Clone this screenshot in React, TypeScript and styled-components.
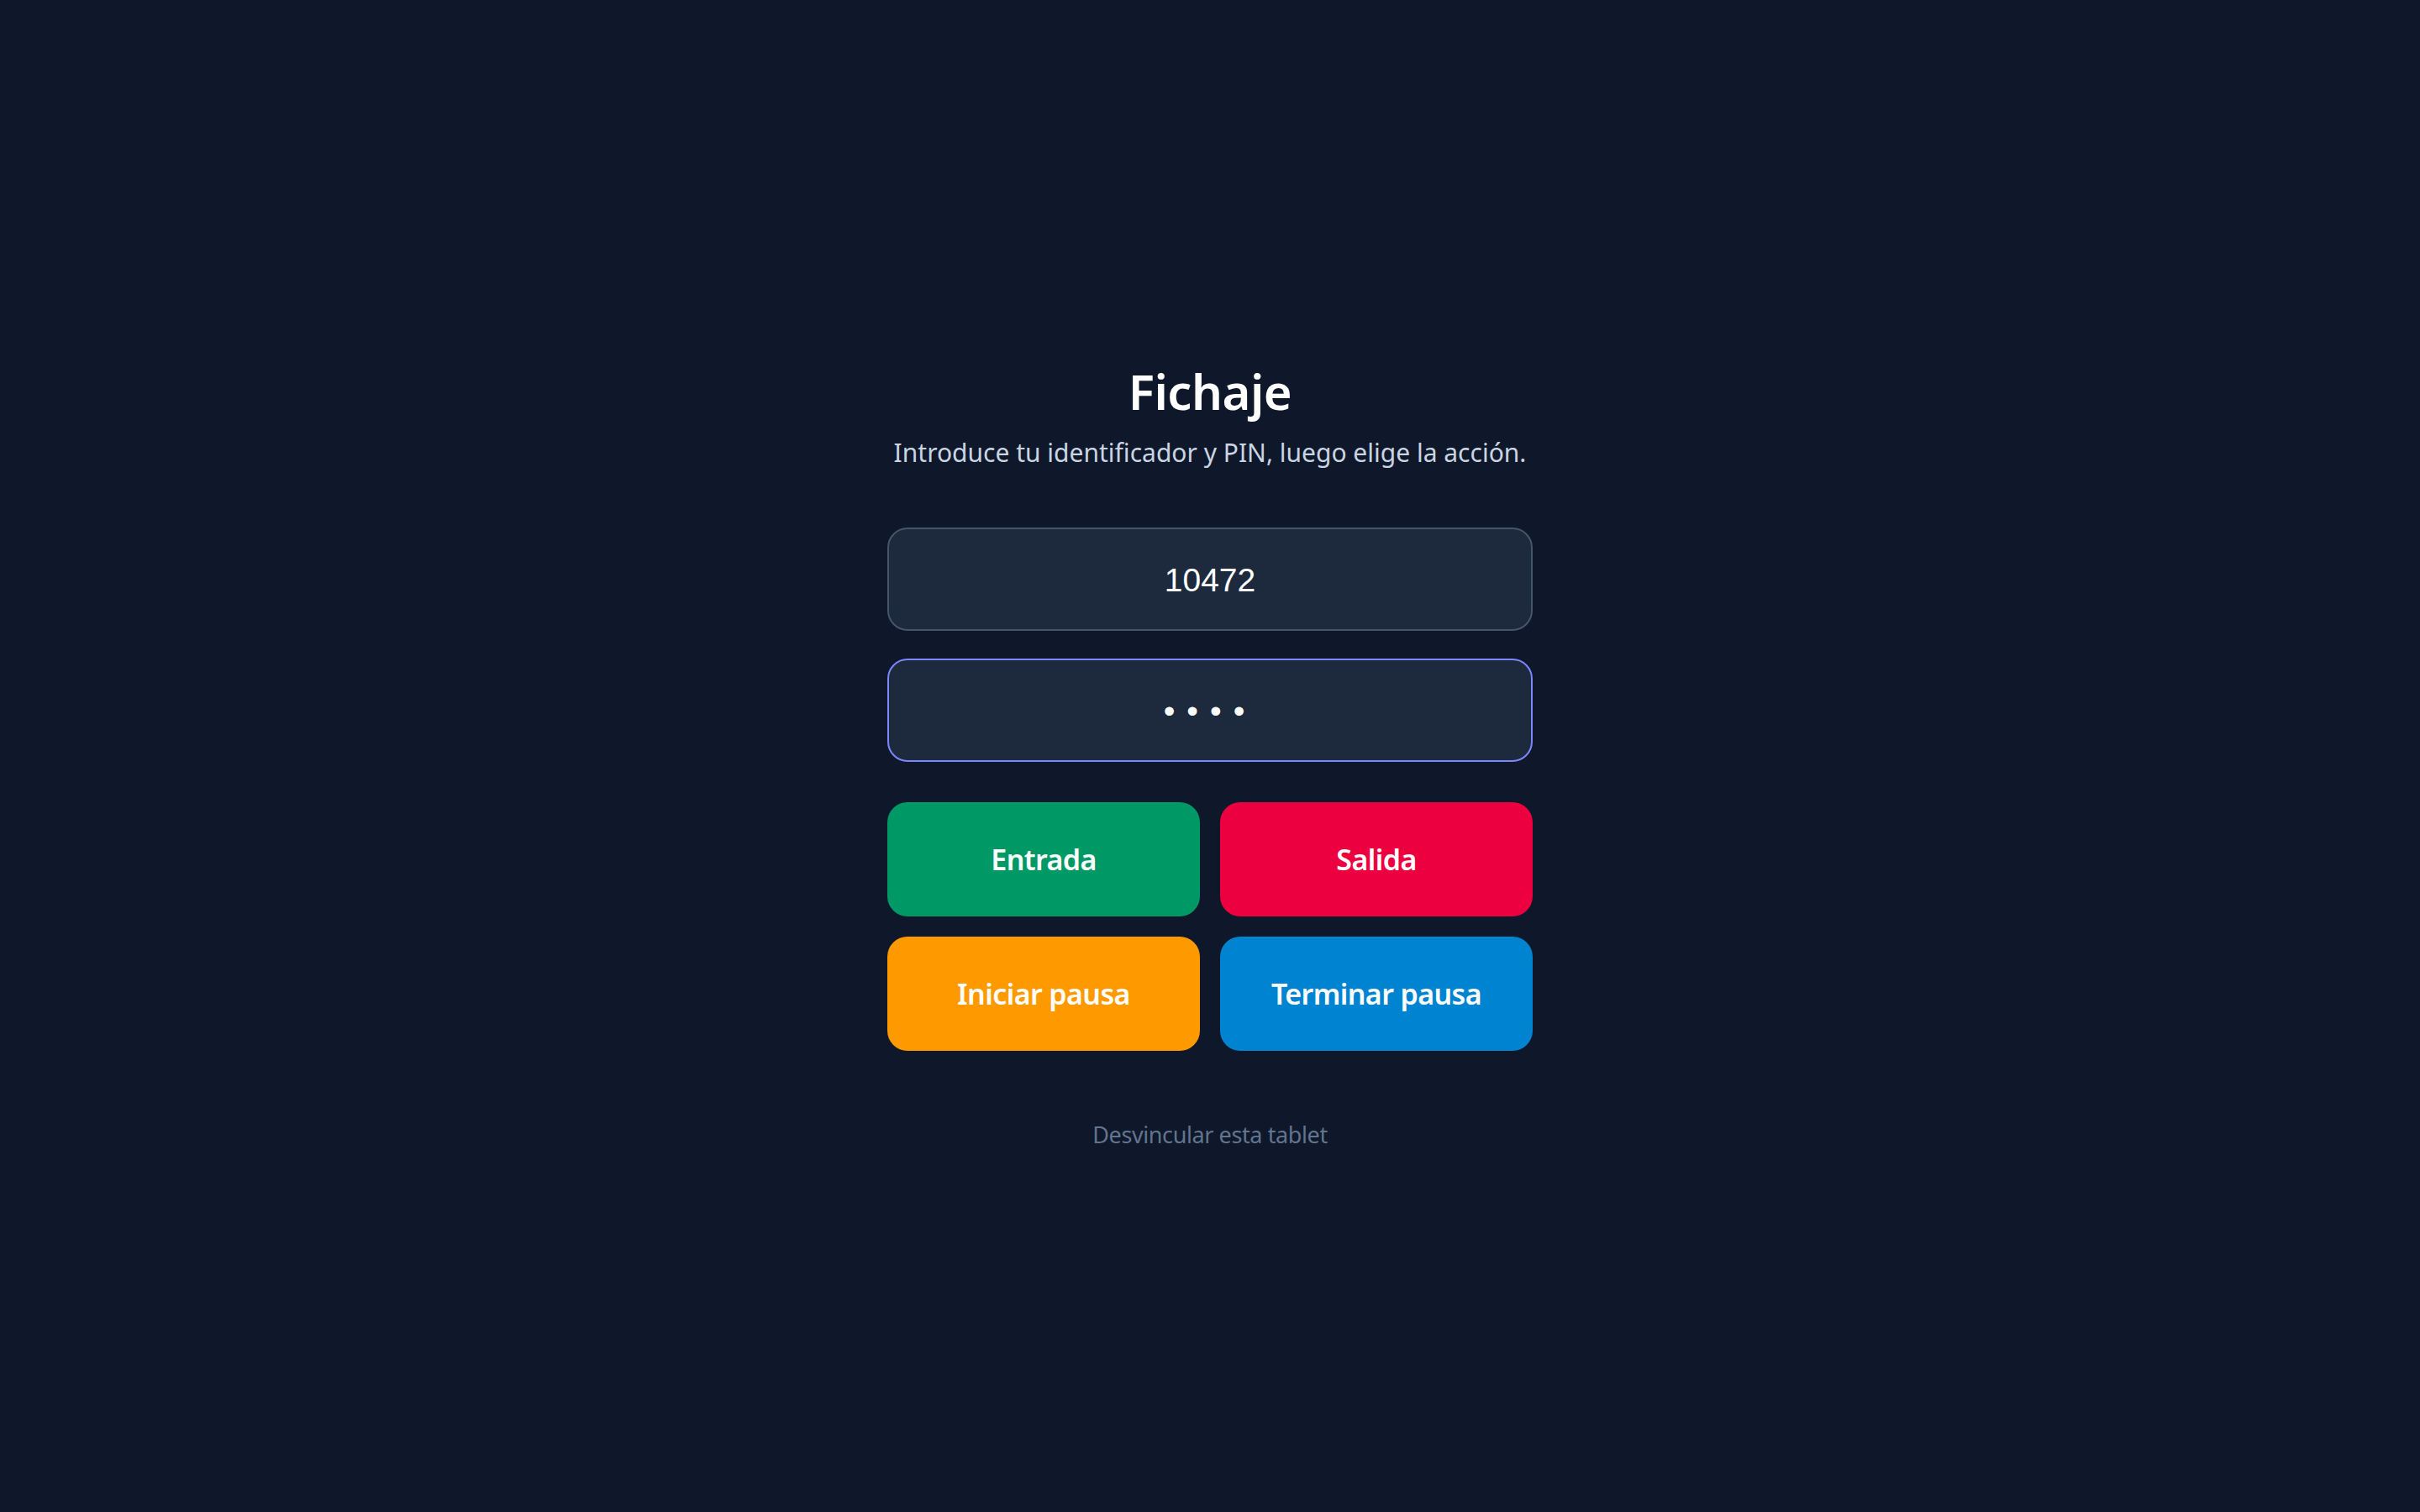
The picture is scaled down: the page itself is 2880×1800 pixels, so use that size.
import React from "react";
import styled, { createGlobalStyle } from "styled-components";

const GlobalStyle = createGlobalStyle`
  html, body {
    margin: 0;
    padding: 0;
    background: #0f172b;
  }
  body {
    font-family: "Segoe UI", "Noto Sans", "Open Sans", sans-serif;
  }
  * { box-sizing: border-box; }
`;

const Page = styled.main`
  min-height: 100vh;
  display: flex;
  align-items: center;
  justify-content: center;
  background: #0f172b;
`;

const Panel = styled.section`
  width: 768px;
  display: flex;
  flex-direction: column;
  align-items: center;
`;

const Title = styled.h1`
  margin: 0;
  font-size: 58px;
  line-height: 72px;
  font-weight: 600;
  color: #ffffff;
  letter-spacing: -0.5px;
`;

const Subtitle = styled.p`
  margin: 17px 0 0;
  font-size: 30px;
  line-height: 40px;
  color: #cad5e2;
  letter-spacing: 0px;
`;

const Form = styled.form`
  width: 100%;
  margin-top: 69px;
  display: flex;
  flex-direction: column;
  gap: 33px;
`;

const Field = styled.input<{ $active?: boolean }>`
  width: 100%;
  height: 123px;
  border-radius: 24px;
  border: 2px solid ${(p) => (p.$active ? "#7c86ff" : "#45556c")};
  background: #1d293d;
  color: #ffffff;
  font-family: "Liberation Sans", Arial, sans-serif;
  font-size: 39px;
  text-align: center;
  outline: none;
  padding: 4px 24px 0;
  letter-spacing: ${(p) => (p.$active ? "14px" : "0")};
`;

const Actions = styled.div`
  width: 100%;
  margin-top: 48px;
  display: grid;
  grid-template-columns: 1fr 1fr;
  gap: 24px;
`;

const ActionButton = styled.button<{ $bg: string }>`
  height: 136px;
  border: none;
  border-radius: 24px;
  background: ${(p) => p.$bg};
  color: #ffffff;
  font-family: "Segoe UI", "Noto Sans", "Open Sans", sans-serif;
  font-size: 34px;
  font-weight: 600;
  letter-spacing: -0.6px;
  cursor: pointer;
  padding-top: 2px;
`;

const UnlinkButton = styled.button`
  margin-top: 80px;
  background: none;
  border: none;
  padding: 0;
  font-family: "Segoe UI", "Noto Sans", "Open Sans", sans-serif;
  font-size: 27px;
  line-height: 40px;
  color: #62748e;
  cursor: pointer;
  letter-spacing: -0.4px;
`;

const actions = [
  { label: "Entrada", color: "#009966" },
  { label: "Salida", color: "#ec003f" },
  { label: "Iniciar pausa", color: "#fe9a00" },
  { label: "Terminar pausa", color: "#0084d1" },
];

export default function App() {
  return (
    <>
      <GlobalStyle />
      <Page>
        <Panel>
          <Title>Fichaje</Title>
          <Subtitle>Introduce tu identificador y PIN, luego elige la acción.</Subtitle>
          <Form onSubmit={(e) => e.preventDefault()}>
            <Field type="text" defaultValue="10472" readOnly />
            <Field type="password" defaultValue="1234" readOnly $active />
          </Form>
          <Actions>
            {actions.map((a) => (
              <ActionButton key={a.label} type="button" $bg={a.color}>
                {a.label}
              </ActionButton>
            ))}
          </Actions>
          <UnlinkButton type="button">Desvincular esta tablet</UnlinkButton>
        </Panel>
      </Page>
    </>
  );
}
